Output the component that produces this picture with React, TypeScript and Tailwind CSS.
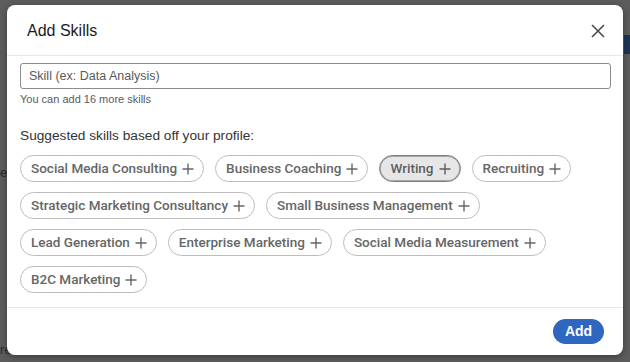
import React from 'react';

const skills = [
  'Social Media Consulting',
  'Business Coaching',
  'Writing',
  'Recruiting',
  'Strategic Marketing Consultancy',
  'Small Business Management',
  'Lead Generation',
  'Enterprise Marketing',
  'Social Media Measurement',
  'B2C Marketing',
];

const PlusIcon = () => (
  <svg width="12" height="12" viewBox="0 0 12 12" className="shrink-0">
    <path d="M6 0.5v11M0.5 6h11" stroke="currentColor" strokeWidth="1.4" fill="none" />
  </svg>
);

const SkillPill = ({ name, selected }: { name: string; selected?: boolean }) => (
  <button
    style={{ fontFamily: 'Roboto, "Liberation Sans", sans-serif' }}
    className={
      selected
        ? 'h-[27px] flex items-center gap-[5px] pl-[10px] pr-[9px] rounded-full border border-[#7d7d7d] bg-[#e6e6e6] shadow-[inset_0_0_0_1px_#a8a8a8] text-[13.5px] font-medium text-[#5e5e5e]'
        : 'h-[27px] flex items-center gap-[5px] pl-[10px] pr-[9px] rounded-full border border-[#bdbdbd] bg-white text-[13.5px] font-medium text-[#666]'
    }
  >
    <span className="leading-none">{name}</span>
    <PlusIcon />
  </button>
);

export default function App() {
  return (
    <div
      className="relative w-[630px] h-[362px] overflow-hidden bg-[#5c5c5c]"
      style={{ fontFamily: '"Liberation Sans", Arial, sans-serif' }}
    >
      {/* bits of the page behind the overlay */}
      <div className="absolute right-0 top-[35px] w-[6px] h-[19px] bg-[#1c3555]" />
      <div className="absolute left-0 top-[163px] text-[13px] text-[#2a2a2a]">e</div>
      <div className="absolute left-0 top-[340px] text-[13px] text-[#2a2a2a]">re</div>

      <div className="pt-[5px] pl-[7px]">
        <div className="relative w-[616px] h-[350px] bg-white rounded-[8px] shadow-[0_2px_6px_rgba(0,0,0,0.35)] flex flex-col">
          {/* Header */}
          <div className="h-[51px] flex items-center justify-between pl-[20px] pr-[18px] border-b border-[#e8e8e8] shrink-0">
            <h1 className="text-[16px] text-[#1b1b1b] pt-[1px]">Add Skills</h1>
            <button className="text-[#4a4a4a] mt-[1px]">
              <svg width="14" height="14" viewBox="0 0 14 14">
                <path d="M1 1l12 12M13 1L1 13" stroke="currentColor" strokeWidth="1.6" fill="none" />
              </svg>
            </button>
          </div>

          {/* Body */}
          <div className="flex-1 pl-[13px] pr-[12px] pt-[7px]">
            <div className="h-[26px] rounded-[3px] border border-[#8c8c8c] flex items-center pl-[8px] text-[12.5px] text-[#5a5a5a]">
              Skill (ex: Data Analysis)
            </div>
            <p className="text-[11px] text-[#5a5a5a] mt-[2px]">You can add 16 more skills</p>

            <p className="text-[13.7px] text-[#333] mt-[18px]">Suggested skills based off your profile:</p>

            <div className="flex flex-wrap gap-x-[11px] gap-y-[10px] mt-[9px] pr-[20px]">
              {skills.map((s) => (
                <SkillPill key={s} name={s} selected={s === 'Writing'} />
              ))}
            </div>
          </div>

          {/* Footer */}
          <div className="h-[48px] border-t border-[#e8e8e8] flex items-center justify-end pr-[19px] shrink-0">
            <button className="w-[51px] h-[25px] rounded-full bg-[#2f66c0] text-white text-[14px] font-bold">
              Add
            </button>
          </div>
        </div>
      </div>
    </div>
  );
}
